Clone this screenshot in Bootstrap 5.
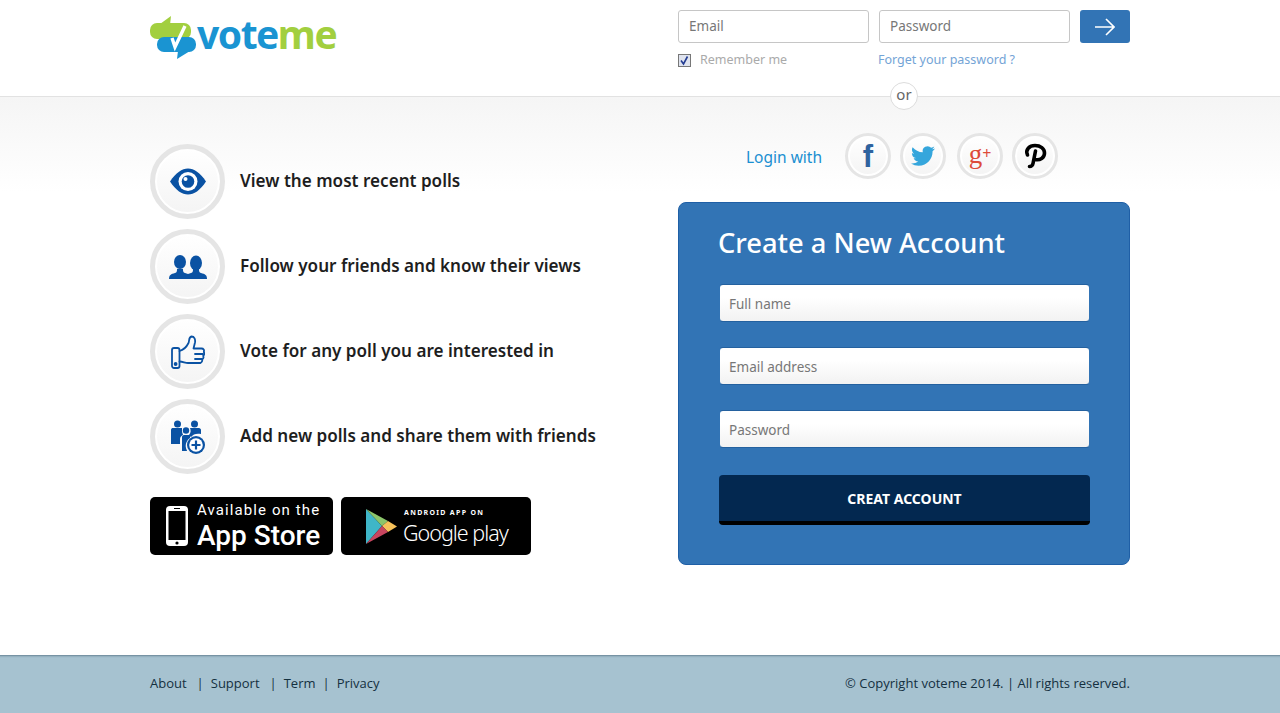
<!DOCTYPE html>
<html lang="en">
<head>
  <meta charset="UTF-8" />
  <meta name="viewport" content="width=device-width, initial-scale=1.0" />
  <title>voteme</title>
  <link href="https://cdn.jsdelivr.net/npm/bootstrap@5.3.0/dist/css/bootstrap.min.css" rel="stylesheet">
  <style>
    body {
      font-family: "Noto Sans", sans-serif;
      background-color: #fff;
      min-height: 713px;
    }

    .vm-wrap {
      width: 980px;
      margin: 0 auto;
    }

    .vm-side {
      width: 452px;
    }

    /* header */
    .vm-top {
      height: 97px;
      border-bottom: 1px solid #e2e2e2;
    }

    .vm-logo {
      margin-top: 15px;
      height: 44px;
      text-decoration: none;
    }

    .vm-logo-text {
      font-size: 39px;
      line-height: 38px;
      font-weight: 700;
      letter-spacing: -1.5px;
      color: #1a94d2;
    }

    .vm-logo-me {
      color: #a2cf3f;
    }

    .vm-login {
      padding-top: 10px;
    }

    .vm-login-row {
      gap: 10px;
    }

    .vm-login-field {
      width: 191px;
      height: 33px;
      border: 1px solid #c6c6c6;
      border-radius: 3px;
      padding: 0 10px 2px;
      font-size: 13.5px;
      box-shadow: none;
    }

    .vm-login-field::placeholder,
    .vm-signup-field::placeholder {
      color: #777;
    }

    .vm-go {
      width: 50px;
      height: 33px;
      background-color: #3274b5;
      border: 0;
      border-radius: 3px;
      padding: 0;
    }

    .vm-remember-col {
      width: 200px;
    }

    .vm-tick.form-check-input {
      width: 13px;
      height: 13px;
      margin: 0;
      border: 1px solid #777;
      border-radius: 0;
      background-color: #dfe3ee;
      background-image: url("data:image/svg+xml,%3Csvg xmlns='http://www.w3.org/2000/svg' viewBox='0 0 13 13'%3E%3Cpath d='M3 6.5 5.5 10 9.5 2.5' fill='none' stroke='%23233c92' stroke-width='1.6'/%3E%3C/svg%3E");
      background-size: 13px 13px;
    }

    .vm-remember {
      font-size: 12.5px;
      color: #aaa;
      margin-left: 9px;
    }

    .vm-forgot {
      font-size: 12.5px;
      color: #74a4d6;
      text-decoration: none;
    }

    .vm-or {
      position: absolute;
      left: 50%;
      margin-left: 250px;
      top: 82px;
      width: 28px;
      height: 28px;
      border: 1px solid #dcdcdc;
      border-radius: 50%;
      background-color: #fff;
      font-size: 15px;
      line-height: 23px;
      color: #666;
      text-align: center;
    }

    /* body */
    .vm-body {
      background: linear-gradient(#f5f5f5 0, #fff 95px);
      height: 558px;
      padding-top: 36px;
    }

    .vm-features {
      padding-top: 6px;
    }

    .vm-feature {
      height: 85px;
      gap: 15px;
    }

    .vm-feature-text {
      font-size: 17.1px;
      font-weight: 600;
      color: #1e1e1e;
      margin: 0 0 2px;
    }

    .vm-ring {
      width: 75px;
      height: 75px;
      border-radius: 50%;
      border: 5px solid #e5e5e5;
      background: linear-gradient(#fff, #f4f4f4);
      box-shadow: inset 0 0 0 2px #fff;
      flex-shrink: 0;
    }

    .vm-ring-sm {
      width: 46px;
      height: 46px;
      border-width: 3px;
      text-decoration: none;
    }

    .vm-stores {
      margin-top: 18px;
      gap: 8px;
    }

    .vm-store {
      height: 58px;
      background-color: #000;
      border-radius: 5px;
      color: #fff;
      text-decoration: none;
    }

    .vm-store-apple {
      width: 183px;
      padding-left: 16px;
      gap: 9px;
      font-family: Roboto, sans-serif;
    }

    .vm-store-google {
      width: 190px;
      padding-left: 25px;
      gap: 6px;
    }

    .vm-apple-line {
      font-size: 15px;
      line-height: 20px;
      letter-spacing: 1.1px;
    }

    .vm-apple-name {
      font-size: 28px;
      line-height: 32px;
      font-weight: 500;
    }

    .vm-google-line {
      font-size: 7px;
      line-height: 12px;
      font-weight: 700;
      letter-spacing: 1.3px;
      margin-left: 1px;
    }

    .vm-google-name {
      font-size: 21.5px;
      line-height: 27px;
      font-weight: 300;
      letter-spacing: -1px;
    }

    /* social */
    .vm-social {
      height: 46px;
      margin-bottom: 23px;
      padding-left: 68px;
    }

    .vm-login-with {
      font-size: 15.5px;
      color: #1a8fd1;
      margin-right: 23px;
      padding-top: 3px;
    }

    .vm-social-next {
      margin-left: 9px;
    }

    .vm-social-wide {
      margin-left: 11px;
    }

    .vm-social-f {
      font-family: "Liberation Sans", sans-serif;
      font-weight: 700;
      font-size: 31px;
      line-height: 1;
      color: #2f639f;
    }

    .vm-social-g {
      font-family: "Liberation Serif", serif;
      font-size: 27px;
      line-height: 1;
      color: #dd4b39;
      margin-top: -4px;
    }

    .vm-social-g sup {
      font-size: 16px;
      font-weight: 700;
      top: -4px;
    }

    /* sign up panel */
    .vm-panel {
      height: 363px;
      background-color: #3274b5;
      border: 1px solid #1f5fa6;
      border-radius: 8px;
      padding: 20px 39px 0 40px;
    }

    .vm-panel-title {
      font-size: 27.3px;
      line-height: 40px;
      font-weight: 500;
      color: #fff;
      margin: 0 0 21px -1px;
    }

    .vm-signup-field {
      height: 38px;
      margin-bottom: 25px;
      border: 1px solid #3274b5;
      border-top-color: #24619f;
      border-bottom-color: #24619f;
      border-radius: 4px;
      padding: 2px 9px 0;
      font-size: 13.5px;
      background: linear-gradient(#fff 35%, #f2f2f2);
      box-shadow: none;
    }

    .vm-signup-btn {
      display: block;
      width: 100%;
      height: 50px;
      margin-top: 27px;
      border: 0;
      border-bottom: 4px solid #000;
      border-radius: 4px;
      background-color: #032850;
      color: #fff;
      font-size: 14px;
      font-weight: 700;
    }

    /* footer */
    .vm-footer {
      height: 58px;
      background-color: #a6c2d0;
      box-shadow: inset 0 3px 2px -2px rgba(40, 70, 90, .5);
      font-family: "Open Sans", sans-serif;
      font-size: 13px;
      color: #14303f;
    }

    .vm-footer a {
      color: #14303f;
      text-decoration: none;
    }

    .vm-footer-links {
      gap: 7px;
    }

    .vm-footer-sep {
      margin-left: 3px;
    }
  </style>
</head>
<body>

  <header class="vm-top position-relative">
    <div class="vm-wrap d-flex justify-content-between">
      <a href="#" class="vm-logo d-flex align-items-start">
        <svg width="47" height="44" viewBox="0 0 47 44">
          <rect x="0" y="8" width="41" height="16" rx="7" fill="#a2cf3f"/>
          <polygon points="10,9 21,1 20,10" fill="#a2cf3f"/>
          <rect x="7" y="22" width="39" height="15" rx="7" fill="#1a94d2"/>
          <polygon points="28,36 27,44 40,36" fill="#1a94d2"/>
          <path d="M22 23 25 32 35 11" fill="none" stroke="#fff" stroke-width="3.4"/>
        </svg>
        <span class="vm-logo-text">vote<span class="vm-logo-me">me</span></span>
      </a>
      <form class="vm-side vm-login">
        <div class="vm-login-row d-flex">
          <input type="text" class="form-control vm-login-field" placeholder="Email">
          <input type="password" class="form-control vm-login-field" placeholder="Password">
          <button type="button" class="btn vm-go d-flex align-items-center justify-content-center" aria-label="Log in">
            <svg width="20" height="18" viewBox="0 0 20 18"><path d="M0 9H19M11 1l8 8-8 8" fill="none" stroke="#fff" stroke-width="1.6"/></svg>
          </button>
        </div>
        <div class="d-flex align-items-center mt-2">
          <div class="vm-remember-col d-flex align-items-center">
            <input type="checkbox" class="form-check-input vm-tick" checked>
            <span class="vm-remember">Remember me</span>
          </div>
          <a href="#" class="vm-forgot">Forget your password ?</a>
        </div>
      </form>
    </div>
    <div class="vm-or">or</div>
  </header>

  <main class="vm-body">
    <div class="vm-wrap d-flex justify-content-between">
      <section class="vm-features">
        <div class="vm-feature d-flex align-items-center">
          <div class="vm-ring d-flex align-items-center justify-content-center">
            <svg width="36" height="27" viewBox="0 0 36 26"><path d="M0 13C6 4 12 0 18 0s12 4 18 13c-6 9-12 13-18 13S6 22 0 13z" fill="#0a52a3"/><circle cx="18" cy="13" r="9.5" fill="#fff"/><circle cx="18" cy="13" r="6.3" fill="#0a52a3"/><circle cx="15.5" cy="10.5" r="2" fill="#fff"/></svg>
          </div>
          <p class="vm-feature-text">View the most recent polls</p>
        </div>
        <div class="vm-feature d-flex align-items-center">
          <div class="vm-ring d-flex align-items-center justify-content-center">
            <svg width="38" height="24" viewBox="0 0 38 24"><g fill="#0a52a3"><ellipse cx="11" cy="7" rx="6" ry="7"/><ellipse cx="27" cy="8" rx="6" ry="7.5"/><path d="M0 24c0-4 2-5 6-6 2-.6 2-2 2-4h6c0 2 0 3.400 2 4l3 1 3-1c2-.6 2-2 2-4h6c0 2 0 3.400 2 4 4 1 6 2 6 6z"/></g></svg>
          </div>
          <p class="vm-feature-text">Follow your friends and know their views</p>
        </div>
        <div class="vm-feature d-flex align-items-center">
          <div class="vm-ring d-flex align-items-center justify-content-center">
            <svg width="34" height="34" viewBox="0 0 34 34" fill="none" stroke="#0a52a3" stroke-width="1.8" stroke-linejoin="round" stroke-linecap="round"><rect x="1" y="13" width="7.5" height="20" rx="2"/><circle cx="4.6" cy="29" r="1" fill="#0a52a3"/><path d="M8.500 16c4-1 7-4 9-8 1-2 0-6 3-6.500 3 0 4 3 3.500 6l-1.500 6h8c2 0 3 1.500 2.300 3.500 .8 1 .6 3-.6 3.800 .6 1.500 0 3-1 3.600 .3 1.800-.6 3.600-2.700 3.600H17c-3 0-5-1.500-8.500-1.500"/><path d="M24 19h8M24 24h7M23 28h6"/></svg>
          </div>
          <p class="vm-feature-text">Vote for any poll you are interested in</p>
        </div>
        <div class="vm-feature d-flex align-items-center">
          <div class="vm-ring d-flex align-items-center justify-content-center">
            <svg width="34" height="34" viewBox="0 0 34 34"><g fill="#0a52a3"><circle cx="6.500" cy="4" r="3.500"/><circle cx="23.500" cy="4" r="3.500"/><circle cx="15" cy="10.500" r="3.200"/><path d="M0 10c0-1.500 1-2 2-2h9v3c0 2 1 3 1 4-2 1-3 2-3 4v5H0z"/><path d="M19 8h9c1 0 2 1 2 2v4c-4-1-8 0-10 3-1-1-2-1-2-2 2-2 2-5 1-7z"/><path d="M11 17c0-1 1-2 2-2h6v3c-3 2-5 6-4 10 0 1 1 2 1 3h-5z"/><circle cx="25" cy="25" r="9"/></g><circle cx="25" cy="25" r="6.800" fill="#fff"/><path d="M25 20.500v9M20.500 25h9" stroke="#0a52a3" stroke-width="2.200"/></svg>
          </div>
          <p class="vm-feature-text">Add new polls and share them with friends</p>
        </div>
        <div class="vm-stores d-flex">
          <a href="#" class="vm-store vm-store-apple d-flex align-items-center">
            <svg width="22" height="40" viewBox="0 0 22 40"><rect x="0" y="0" width="22" height="40" rx="4" fill="#fff"/><rect x="2.500" y="5" width="17" height="29" fill="#000"/><rect x="8" y="2" width="6" height="1" fill="#000"/><circle cx="11" cy="37" r="1.600" fill="#000"/></svg>
            <div>
              <div class="vm-apple-line">Available on the</div>
              <div class="vm-apple-name">App Store</div>
            </div>
          </a>
          <a href="#" class="vm-store vm-store-google d-flex align-items-center">
            <svg width="31" height="35" viewBox="0 0 31 35"><polygon points="0,0 16,17 0,35" fill="#3fb6c8"/><polygon points="0,0 22,12 16,17" fill="#8cc56b"/><polygon points="22,12 31,17.500 22,23 16,17" fill="#f7c25a"/><polygon points="0,35 16,17 22,23" fill="#c8455f"/></svg>
            <div>
              <div class="vm-google-line">ANDROID APP ON</div>
              <div class="vm-google-name">Google play</div>
            </div>
          </a>
        </div>
      </section>

      <section class="vm-side">
        <div class="vm-social d-flex align-items-center">
          <span class="vm-login-with">Login with</span>
          <a href="#" class="vm-ring vm-ring-sm d-flex align-items-center justify-content-center" aria-label="Facebook"><span class="vm-social-f">f</span></a>
          <a href="#" class="vm-ring vm-ring-sm vm-social-next d-flex align-items-center justify-content-center" aria-label="Twitter">
            <svg width="24" height="24" viewBox="0 0 24 24"><path fill="#35a6dc" d="M23.953 4.57a10 10 0 01-2.825.775 4.958 4.958 0 002.163-2.723c-.951.555-2.005.959-3.127 1.184a4.92 4.92 0 00-8.384 4.482C7.69 8.095 4.067 6.13 1.64 3.162a4.822 4.822 0 00-.666 2.475c0 1.71.87 3.213 2.188 4.096a4.904 4.904 0 01-2.228-.616v.06a4.923 4.923 0 003.946 4.827 4.996 4.996 0 01-2.212.085 4.936 4.936 0 004.604 3.417 9.867 9.867 0 01-6.102 2.105c-.39 0-.779-.023-1.17-.067a13.995 13.995 0 007.557 2.209c9.053 0 13.998-7.496 13.998-13.985 0-.21 0-.42-.015-.63A9.935 9.935 0 0024 4.59z"/></svg>
          </a>
          <a href="#" class="vm-ring vm-ring-sm vm-social-wide d-flex align-items-center justify-content-center" aria-label="Google plus"><span class="vm-social-g">g<sup>+</sup></span></a>
          <a href="#" class="vm-ring vm-ring-sm vm-social-next d-flex align-items-center justify-content-center" aria-label="Pinterest">
            <svg width="24" height="26" viewBox="0 0 24 26" fill="none" stroke="#000" stroke-linecap="round"><path d="M4.500 12C2 6.500 6.500 2.500 12 2.500c5.500 0 9.500 3 9.500 7.500 0 5-4.500 7.500-9.500 6.500" stroke-width="3.600"/><path d="M12.500 8 10 20.500c-.4 2-2 3-3.500 3" stroke-width="3.600"/></svg>
          </a>
        </div>

        <form class="vm-panel">
          <h2 class="vm-panel-title">Create a New Account</h2>
          <input type="text" class="form-control vm-signup-field" placeholder="Full name">
          <input type="email" class="form-control vm-signup-field" placeholder="Email address">
          <input type="password" class="form-control vm-signup-field" placeholder="Password">
          <button type="button" class="btn vm-signup-btn">CREAT ACCOUNT</button>
        </form>
      </section>
    </div>
  </main>

  <footer class="vm-footer">
    <div class="vm-wrap h-100 d-flex justify-content-between align-items-center">
      <div class="vm-footer-links d-flex">
        <a href="#">About</a><span class="vm-footer-sep">|</span>
        <a href="#">Support</a><span class="vm-footer-sep">|</span>
        <a href="#">Term</a><span>|</span>
        <a href="#">Privacy</a>
      </div>
      <div>© Copyright voteme 2014. | All rights reserved.</div>
    </div>
  </footer>

  <script src="https://cdn.jsdelivr.net/npm/bootstrap@5.3.0/dist/js/bootstrap.bundle.min.js"></script>
</body>
</html>
